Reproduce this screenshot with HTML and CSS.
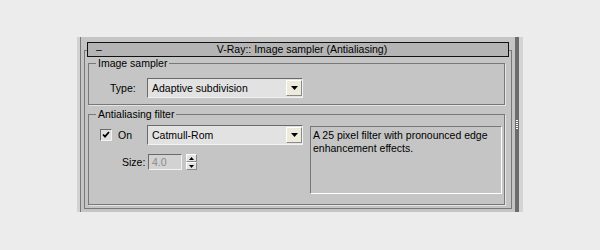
FILE: index.html
```html
<!DOCTYPE html>
<html lang="en">
<head>
    <meta charset="UTF-8">
    <title>V-Ray Image sampler</title>
    <link rel="stylesheet" href="styles.css">
</head>
<body>
    <div class="panel">
        <div class="rollups">
            <div class="rollout">
                <div class="rollout-title">
                    <span class="toggle">&ndash;</span>
                    <span class="title-text">V-Ray:: Image sampler (Antialiasing)</span>
                </div>

                <fieldset class="group group-sampler">
                    <legend>Image sampler</legend>
                    <div class="type-row">
                        <span class="type-label">Type:</span>
                        <div class="dropdown">
                            <span class="dropdown-value">Adaptive subdivision</span>
                            <span class="dropdown-btn">
                                <svg width="7" height="4" viewBox="0 0 7 4"><path d="M0 0h7L3.5 4z" fill="#000"/></svg>
                            </span>
                        </div>
                    </div>
                </fieldset>

                <fieldset class="group group-filter">
                    <legend>Antialiasing filter</legend>
                    <div class="filter-body">
                        <div class="filter-controls">
                            <div class="on-row">
                                <span class="checkbox">
                                    <svg width="8" height="8" viewBox="0 0 8 8"><path d="M1 3.5l2 2.2L7 1" fill="none" stroke="#000" stroke-width="1.8"/></svg>
                                </span>
                                <span class="on-label">On</span>
                                <div class="dropdown">
                                    <span class="dropdown-value">Catmull-Rom</span>
                                    <span class="dropdown-btn">
                                        <svg width="7" height="4" viewBox="0 0 7 4"><path d="M0 0h7L3.5 4z" fill="#000"/></svg>
                                    </span>
                                </div>
                            </div>
                            <div class="size-row">
                                <span class="size-label">Size:</span>
                                <span class="size-input">4.0</span>
                                <span class="spinner">
                                    <span class="spin-btn"><svg width="5" height="3" viewBox="0 0 5 3"><path d="M0 3h5L2.5 0z" fill="#000"/></svg></span>
                                    <span class="spin-btn"><svg width="5" height="3" viewBox="0 0 5 3"><path d="M0 0h5L2.5 3z" fill="#000"/></svg></span>
                                </span>
                            </div>
                        </div>
                        <div class="filter-desc">A 25 pixel filter with pronounced edge enhancement effects.</div>
                    </div>
                </fieldset>
            </div>
        </div>
        <div class="scrollbar">
            <div class="thumb"><span class="grip"></span></div>
        </div>
    </div>
</body>
</html>
```

FILE: styles.css
```css
/* page */
body {
    margin: 0;
    background-color: #ececec;
    font-family: "Liberation Sans", Arial, sans-serif;
    font-size: 10.5px;
    color: #000;
}

/* command panel */
.panel {
    display: flex;
    width: 443px;
    height: 175px;
    margin: 37px 0 0 77px;
    border-left: 3px solid #d2d2d2;
    background-color: #c5c5c5;
}

.rollups {
    flex: 1;
    border-left: 1px solid #787878;
    padding-left: 3px;
}

.rollout {
    box-sizing: border-box;
    width: 428px;
    height: 159px;
    margin-top: 13px;
    border: 1px solid #787878;
}

.rollout-title {
    box-sizing: border-box;
    display: flex;
    align-items: center;
    height: 15px;
    margin: -9px 2px 0;
    border: 1px solid #111;
    background-color: #b4b4b4;
    line-height: 13px;
}

.toggle {
    width: 0;
    padding-left: 8px;
}

.title-text {
    flex: 1;
    text-align: center;
}

/* group boxes */
.group {
    margin: 0 6px 0 3px;
    padding: 0;
    border: 1px solid #787878;
    box-shadow: 1px 1px 0 #e4e4e4;
    min-inline-size: 0;
}

.group legend {
    margin-left: 7px;
    padding: 0 2px;
    line-height: 13px;
}

.group-filter {
    margin-top: 3px;
    height: 97px;
    box-sizing: border-box;
}

.type-row {
    display: flex;
    align-items: center;
    padding: 8px 0 6px 21px;
}

.type-label {
    width: 37px;
}

/* dropdowns */
.dropdown {
    box-sizing: border-box;
    display: flex;
    width: 156px;
    height: 20px;
    border: 1px solid;
    border-color: #6a6a6a #f2f2f2 #f2f2f2 #6a6a6a;
    background-color: #e2e2e2;
}

.dropdown-value {
    flex: 1;
    padding-left: 4px;
    line-height: 18px;
}

.dropdown-btn {
    box-sizing: border-box;
    display: flex;
    align-items: center;
    justify-content: center;
    width: 16px;
    margin: 1px 0;
    border: 1px solid;
    border-color: #fff #8a8a8a #8a8a8a #fff;
    background-color: #ecebdc;
}

/* antialiasing filter */
.filter-body {
    display: flex;
    padding: 4px 0 0 11px;
}

.on-row {
    display: flex;
    align-items: center;
}

.checkbox {
    box-sizing: border-box;
    display: flex;
    align-items: center;
    justify-content: center;
    width: 12px;
    height: 12px;
    border: 1px solid;
    border-color: #6a6a6a #f2f2f2 #f2f2f2 #6a6a6a;
    background-color: #e0e0e0;
}

.on-label {
    width: 29px;
    margin-left: 6px;
}

.size-row {
    display: flex;
    align-items: center;
    margin-top: 9px;
    padding-left: 22px;
}

.size-label {
    width: 26px;
}

.size-input {
    box-sizing: border-box;
    width: 34px;
    height: 16px;
    padding-left: 3px;
    border: 1px solid;
    border-color: #6a6a6a #f2f2f2 #f2f2f2 #6a6a6a;
    background-color: #d2d2d2;
    color: #8a8a8a;
    line-height: 14px;
}

.spinner {
    display: flex;
    flex-direction: column;
    margin-left: 4px;
}

.spin-btn {
    box-sizing: border-box;
    display: flex;
    align-items: center;
    justify-content: center;
    width: 11px;
    height: 8px;
    border: 1px solid;
    border-color: #fff #8a8a8a #8a8a8a #fff;
    background-color: #e4e4e4;
}

.filter-desc {
    box-sizing: border-box;
    width: 192px;
    height: 68px;
    margin: 1px 0 0 7px;
    padding: 2px 2px;
    border: 1px solid;
    border-color: #787878 #fff #fff #787878;
    line-height: 13px;
}

/* scrollbar */
.scrollbar {
    box-sizing: border-box;
    width: 10px;
    padding-left: 2px;
    display: flex;
}

.thumb {
    width: 4px;
    background-color: #6c6c6c;
    display: flex;
    align-items: center;
    justify-content: center;
    border-right: 4px solid #d4d4d4;
}

.grip {
    width: 2px;
    height: 9px;
    background: repeating-linear-gradient(#fff 0 1px, transparent 1px 2px);
}
```
